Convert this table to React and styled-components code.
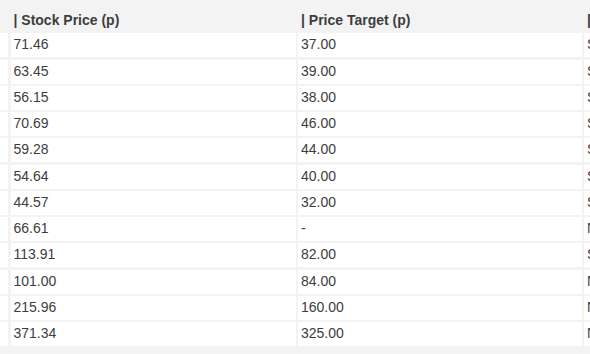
import React from 'react';
import styled, { createGlobalStyle } from 'styled-components';

const GlobalStyle = createGlobalStyle`
    html, body {
        margin: 0;
        padding: 0;
        background: #f3f3f3;
    }
    body {
        font-family: "Liberation Sans", Arial, Helvetica, sans-serif;
        color: #3d3d3d;
    }
`;

const rows = [
    ['71.46', '37.00', 'Speculative Buy'],
    ['63.45', '39.00', 'Speculative Buy'],
    ['56.15', '38.00', 'Speculative Buy'],
    ['70.69', '46.00', 'Speculative Buy'],
    ['59.28', '44.00', 'Speculative Buy'],
    ['54.64', '40.00', 'Speculative Buy'],
    ['44.57', '32.00', 'Speculative Buy'],
    ['66.61', '-', 'Not Rated'],
    ['113.91', '82.00', 'Speculative Buy'],
    ['101.00', '84.00', 'Not Rated'],
    ['215.96', '160.00', 'Not Rated'],
    ['371.34', '325.00', 'Not Rated'],
];

const Wrapper = styled.div`
    width: 590px;
    height: 354px;
    overflow: hidden;
    background: #f3f3f3;
`;

const Table = styled.div`
    display: grid;
    grid-template-columns: 8px 285px 283.5px 200px;
    column-gap: 2.5px;
    row-gap: 2.27px;
`;

const HeadCell = styled.div`
    height: 31px;
    box-sizing: border-box;
    padding: 12px 3px 0;
    font-size: 14px;
    font-weight: bold;
    line-height: 16px;
    white-space: nowrap;
    overflow: hidden;
`;

const Cell = styled.div`
    background: #fff;
    height: 24px;
    box-sizing: border-box;
    padding: 3px 3px 0;
    font-size: 14px;
    line-height: 16px;
    white-space: nowrap;
    overflow: hidden;
`;

export default function App() {
    return (
        <Wrapper>
            <GlobalStyle />
            <Table>
                <HeadCell />
                <HeadCell>| Stock Price (p)</HeadCell>
                <HeadCell>| Price Target (p)</HeadCell>
                <HeadCell>| Rating</HeadCell>
                {rows.map((r, i) => (
                    <React.Fragment key={i}>
                        <Cell />
                        <Cell>{r[0]}</Cell>
                        <Cell>{r[1]}</Cell>
                        <Cell>{r[2]}</Cell>
                    </React.Fragment>
                ))}
            </Table>
        </Wrapper>
    );
}
